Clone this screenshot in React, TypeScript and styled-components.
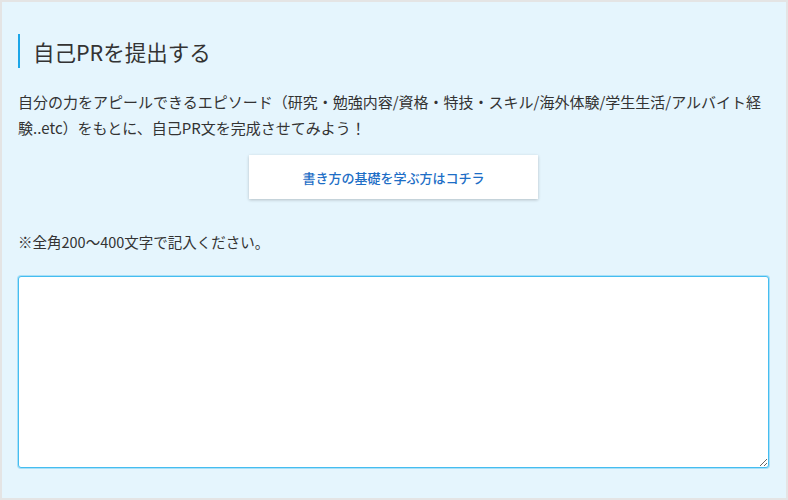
import React from "react";
import styled, { createGlobalStyle } from "styled-components";

const Global = createGlobalStyle`
  html, body { margin: 0; padding: 0; background: #ffffff; }
  body { font-family: "Noto Sans CJK JP", "Noto Sans", sans-serif; }
  * { box-sizing: border-box; }
`;

const Frame = styled.div`
  width: 788px;
  height: 500px;
  border: 2px solid #e4e4e4;
  background: #e5f5fd;
  padding: 32px 18px 0 16px;
  display: flex;
  flex-direction: column;
`;

const Heading = styled.h2`
  margin: 0;
  border-left: 2px solid #1ca6e8;
  padding-left: 13px;
  height: 34px;
  display: flex;
  align-items: center;
  font-size: 21.5px;
  font-weight: 400;
  color: #333333;
`;

const Lead = styled.p`
  margin: 21px 0 0;
  font-size: 15px;
  line-height: 26px;
  color: #333333;
`;

const ButtonRow = styled.div`
  display: flex;
  justify-content: center;
  margin-top: 14px;
  padding-left: 1px;
`;

const GuideButton = styled.a`
  width: 289px;
  height: 44px;
  background: #ffffff;
  box-shadow: 0 1px 3px rgba(0, 0, 0, 0.22);
  display: flex;
  align-items: center;
  justify-content: center;
  font-size: 13px;
  font-weight: 500;
  color: #1d6ec6;
  text-decoration: none;
  cursor: pointer;
`;

const Note = styled.p`
  margin: 32px 0 0;
  font-size: 14.5px;
  line-height: 22px;
  color: #333333;
`;

const Entry = styled.textarea`
  margin-top: 23px;
  width: 751px;
  height: 192px;
  border: 1px solid #45bdf0;
  box-shadow: 0 0 0 1px #a8e0f8;
  border-radius: 3px;
  background: #ffffff;
  resize: vertical;
  outline: none;
  font-family: inherit;
  font-size: 14px;
  padding: 8px;
`;

export default function App() {
  return (
    <>
      <Global />
      <Frame>
        <Heading>自己PRを提出する</Heading>
        <Lead>
          自分の力をアピールできるエピソード（研究・勉強内容/資格・特技・スキル/海外体験/学生生活/アルバイト経験..etc）をもとに、自己PR文を完成させてみよう！
        </Lead>
        <ButtonRow>
          <GuideButton>書き方の基礎を学ぶ方はコチラ</GuideButton>
        </ButtonRow>
        <Note>※全角200〜400文字で記入ください。</Note>
        <Entry />
      </Frame>
    </>
  );
}
